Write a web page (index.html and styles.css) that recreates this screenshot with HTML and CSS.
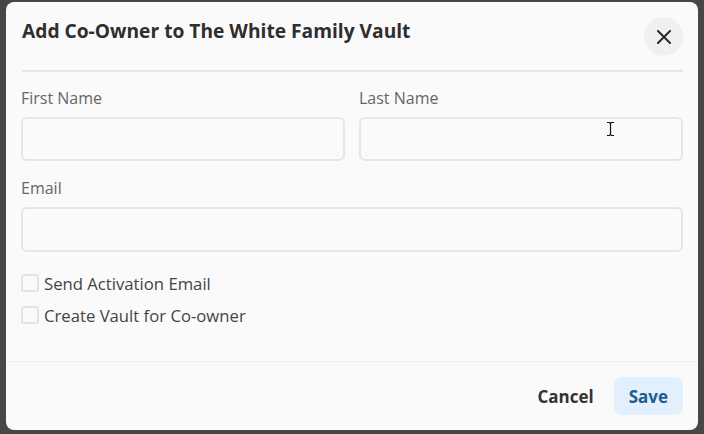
FILE: index.html
```html
<!DOCTYPE html>
<html>
<head>
<meta charset="utf-8">
<link rel="stylesheet" href="styles.css">
</head>
<body>
<div class="backdrop">
  <div class="dialog">
    <div class="header">
      <h1 class="title">Add Co-Owner to The White Family Vault</h1>
      <button class="close" aria-label="Close">
        <svg width="14" height="14" viewBox="0 0 14 14"><path d="M1 1L13 13M13 1L1 13" stroke="#2b2b2b" stroke-width="2" stroke-linecap="square" fill="none"/></svg>
      </button>
    </div>
    <div class="body">
      <div class="row">
        <div class="field">
          <label class="label">First Name</label>
          <div class="input"></div>
        </div>
        <div class="field">
          <label class="label">Last Name</label>
          <div class="input"></div>
        </div>
      </div>
      <div class="field">
        <label class="label">Email</label>
        <div class="input tall"></div>
      </div>
      <div class="checks">
        <div class="check"><span class="box"></span><span>Send Activation Email</span></div>
        <div class="check"><span class="box"></span><span>Create Vault for Co-owner</span></div>
      </div>
    </div>
    <div class="footer">
      <button class="btn cancel">Cancel</button>
      <button class="btn save">Save</button>
    </div>
    <svg class="cursor" width="9" height="16" viewBox="0 0 9 16"><path d="M1 1.5H3.5L4.5 2.5L5.5 1.5H8M4.5 2.5V13.5M1 14.5H3.5L4.5 13.5L5.5 14.5H8" stroke="#111" stroke-width="1.2" fill="none"/></svg>
  </div>
</div>
</body>
</html>
```

FILE: styles.css
```css
* { box-sizing: border-box; }
html, body { margin: 0; padding: 0; }
body {
  width: 704px;
  height: 434px;
  background: #474747;
  font-family: "Open Sans", "Noto Sans", sans-serif;
  overflow: hidden;
}
.backdrop {
  padding: 2px 6px 0 6px;
}
.dialog {
  position: relative;
  width: 692px;
  height: 428px;
  background: #fafafa;
  border-radius: 8px;
  display: flex;
  flex-direction: column;
}
.header {
  margin: 0 15px 0 16px;
  padding: 15px 0 14px 0;
  border-bottom: 2px solid #e6e6e6;
  display: flex;
  justify-content: space-between;
  align-items: flex-start;
}
.title {
  margin: 0;
  font-size: 19.2px;
  line-height: 28px;
  font-weight: 700;
  color: #2e2e2e;
}
.close {
  width: 39px;
  height: 39px;
  border-radius: 50%;
  border: none;
  background: #f0f0f0;
  display: flex;
  align-items: center;
  justify-content: center;
  padding: 0;
  margin-top: 0;
}
.body {
  flex: 1;
  padding: 14px 15px 0 15px;
  display: flex;
  flex-direction: column;
}
.row {
  display: flex;
  gap: 14px;
  margin-bottom: 15px;
}
.row .field { flex: 1; }
.label {
  display: block;
  font-size: 16px;
  line-height: 24px;
  color: #666;
  margin-bottom: 7px;
}
.input {
  height: 44px;
  border: 2px solid #e6e6e6;
  border-radius: 6px;
  background: #fafafa;
}
.input.tall { height: 45px; }
.checks {
  margin-top: 15px;
  display: flex;
  flex-direction: column;
}
.check {
  height: 32px;
  display: flex;
  align-items: center;
  gap: 5px;
  font-size: 16.7px;
  color: #444;
}
.box {
  width: 18px;
  height: 18px;
  border: 2px solid #e3e3e3;
  border-radius: 3px;
  background: #fafafa;
}
.footer {
  border-top: 1px solid #f0f0f0;
  padding: 15px 15px 15px 15px;
  display: flex;
  justify-content: flex-end;
  gap: 6px;
}
.btn {
  height: 38px;
  border: none;
  border-radius: 8px;
  font-family: "Open Sans", "Noto Sans", sans-serif;
  font-size: 17px;
  font-weight: 700;
  padding: 0 14px;
  cursor: pointer;
}
.cancel {
  background: transparent;
  color: #333;
}
.save {
  background: #e2effc;
  color: #1b5d92;
  padding: 0 15px;
}
.cursor {
  position: absolute;
  left: 600px;
  top: 119px;
}
```
